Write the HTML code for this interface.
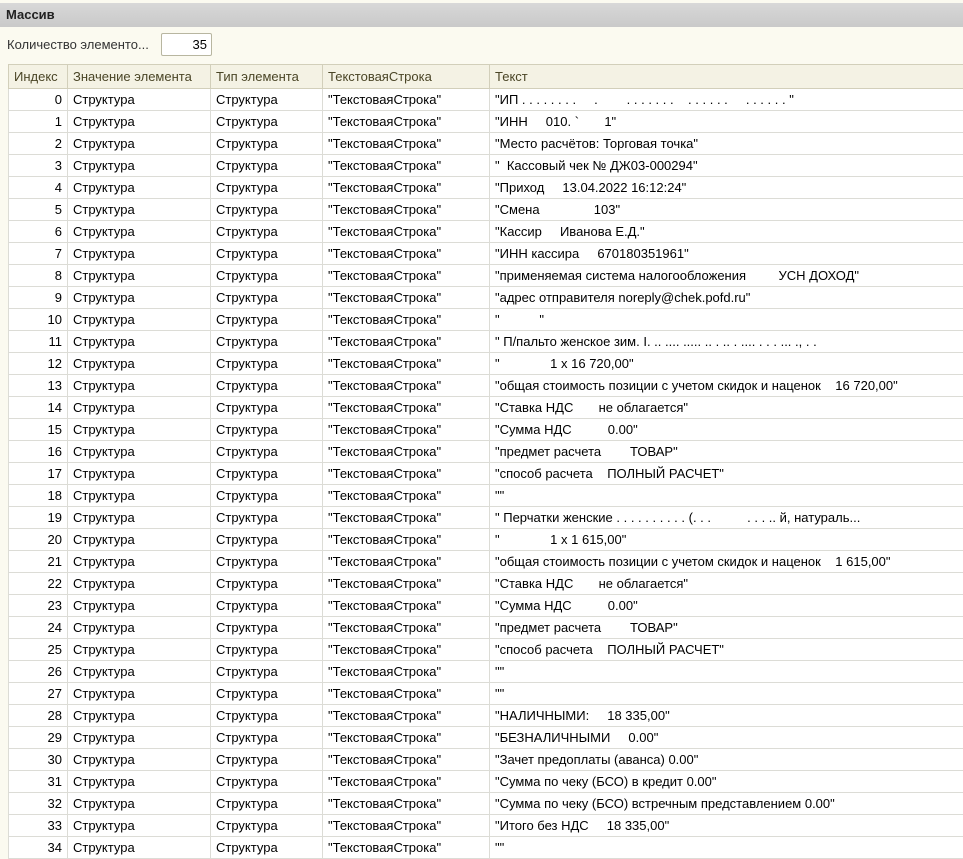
<!DOCTYPE html>
<html><head><meta charset="utf-8"><style>
body{margin:0;width:963px;height:858px;overflow:hidden;background:#fbfaf0;font-family:"Liberation Sans",sans-serif;font-size:13px;color:#000;position:relative}
.title{position:absolute;left:0;top:3px;width:963px;height:24px;background:linear-gradient(#d8d8d8,#c9c9c9);font-weight:bold;font-size:13px;line-height:24px;padding-left:6px;box-sizing:border-box;color:#222}
.lbl{position:absolute;left:7px;top:37px;color:#333}
.inp{position:absolute;left:161px;top:33px;width:51px;height:23px;border:1px solid #b8b6a0;background:#fff;box-sizing:border-box;border-radius:2px;text-align:right;padding-right:4px;line-height:21px}
table{position:absolute;left:8px;top:64px;border-collapse:collapse;table-layout:fixed;width:960px;background:#fff}
td,th{border:1px solid #dcdcd6;height:21px;padding:0 5px;white-space:nowrap;overflow:hidden;font-weight:normal;text-align:left;line-height:21px}
th{background:#f4f2e4;color:#4a4526;border-color:#d2cfba;height:23px;font-size:13px}
td.i{text-align:right}
tr.sel td{border-top:1px dotted #000;border-bottom:1px dotted #000}
</style></head><body>
<div class="title">Массив</div>
<div class="lbl">Количество элементо...</div>
<div class="inp">35</div>
<table>
<colgroup><col style="width:59px"><col style="width:143px"><col style="width:112px"><col style="width:167px"><col style="width:479px"></colgroup>
<tr><th>Индекс</th><th>Значение элемента</th><th>Тип элемента</th><th>ТекстоваяСтрока</th><th>Текст</th></tr>
<tr class="sel"><td class="i">0</td><td>Структура</td><td>Структура</td><td>"ТекстоваяСтрока"</td><td>"ИП . . . . . . . .&nbsp;&nbsp;&nbsp;&nbsp; .&nbsp;&nbsp;&nbsp;&nbsp;&nbsp;&nbsp;&nbsp; . . . . . . .&nbsp;&nbsp;&nbsp; . . . . . .&nbsp;&nbsp;&nbsp;&nbsp; . . . . . . "</td></tr>
<tr><td class="i">1</td><td>Структура</td><td>Структура</td><td>"ТекстоваяСтрока"</td><td>"ИНН &nbsp;&nbsp;&nbsp; 010. `&nbsp;&nbsp;&nbsp;&nbsp;&nbsp;&nbsp; 1"</td></tr>
<tr><td class="i">2</td><td>Структура</td><td>Структура</td><td>"ТекстоваяСтрока"</td><td>"Место расчётов: Торговая точка"</td></tr>
<tr><td class="i">3</td><td>Структура</td><td>Структура</td><td>"ТекстоваяСтрока"</td><td>"&nbsp; Кассовый чек № ДЖ03-000294"</td></tr>
<tr><td class="i">4</td><td>Структура</td><td>Структура</td><td>"ТекстоваяСтрока"</td><td>"Приход &nbsp;&nbsp;&nbsp; 13.04.2022 16:12:24"</td></tr>
<tr><td class="i">5</td><td>Структура</td><td>Структура</td><td>"ТекстоваяСтрока"</td><td>"Смена &nbsp;&nbsp;&nbsp;&nbsp;&nbsp;&nbsp;&nbsp;&nbsp;&nbsp;&nbsp;&nbsp;&nbsp;&nbsp; 103"</td></tr>
<tr><td class="i">6</td><td>Структура</td><td>Структура</td><td>"ТекстоваяСтрока"</td><td>"Кассир &nbsp;&nbsp;&nbsp; Иванова Е.Д."</td></tr>
<tr><td class="i">7</td><td>Структура</td><td>Структура</td><td>"ТекстоваяСтрока"</td><td>"ИНН кассира &nbsp;&nbsp;&nbsp; 670180351961"</td></tr>
<tr><td class="i">8</td><td>Структура</td><td>Структура</td><td>"ТекстоваяСтрока"</td><td>"применяемая система налогообложения &nbsp;&nbsp;&nbsp;&nbsp;&nbsp;&nbsp;&nbsp; УСН ДОХОД"</td></tr>
<tr><td class="i">9</td><td>Структура</td><td>Структура</td><td>"ТекстоваяСтрока"</td><td>"адрес отправителя noreply@chek.pofd.ru"</td></tr>
<tr><td class="i">10</td><td>Структура</td><td>Структура</td><td>"ТекстоваяСтрока"</td><td>"&nbsp;&nbsp;&nbsp;&nbsp;&nbsp;&nbsp;&nbsp;&nbsp;&nbsp;&nbsp; "</td></tr>
<tr><td class="i">11</td><td>Структура</td><td>Структура</td><td>"ТекстоваяСтрока"</td><td>" П/пальто женское зим. I. .. .... ..... .. . .. . .... . . . ... ., . .</td></tr>
<tr><td class="i">12</td><td>Структура</td><td>Структура</td><td>"ТекстоваяСтрока"</td><td>"&nbsp;&nbsp;&nbsp;&nbsp;&nbsp;&nbsp;&nbsp;&nbsp;&nbsp;&nbsp;&nbsp;&nbsp;&nbsp; 1 x 16 720,00"</td></tr>
<tr><td class="i">13</td><td>Структура</td><td>Структура</td><td>"ТекстоваяСтрока"</td><td>"общая стоимость позиции с учетом скидок и наценок &nbsp;&nbsp; 16 720,00"</td></tr>
<tr><td class="i">14</td><td>Структура</td><td>Структура</td><td>"ТекстоваяСтрока"</td><td>"Ставка НДС &nbsp;&nbsp;&nbsp;&nbsp;&nbsp; не облагается"</td></tr>
<tr><td class="i">15</td><td>Структура</td><td>Структура</td><td>"ТекстоваяСтрока"</td><td>"Сумма НДС &nbsp;&nbsp;&nbsp;&nbsp;&nbsp;&nbsp;&nbsp;&nbsp; 0.00"</td></tr>
<tr><td class="i">16</td><td>Структура</td><td>Структура</td><td>"ТекстоваяСтрока"</td><td>"предмет расчета &nbsp;&nbsp;&nbsp;&nbsp;&nbsp;&nbsp; ТОВАР"</td></tr>
<tr><td class="i">17</td><td>Структура</td><td>Структура</td><td>"ТекстоваяСтрока"</td><td>"способ расчета &nbsp;&nbsp; ПОЛНЫЙ РАСЧЕТ"</td></tr>
<tr><td class="i">18</td><td>Структура</td><td>Структура</td><td>"ТекстоваяСтрока"</td><td>""</td></tr>
<tr><td class="i">19</td><td>Структура</td><td>Структура</td><td>"ТекстоваяСтрока"</td><td>" Перчатки женские . . . . . . . . . . (. . .&nbsp;&nbsp;&nbsp;&nbsp;&nbsp;&nbsp;&nbsp;&nbsp;&nbsp; . . . .. й, натураль...</td></tr>
<tr><td class="i">20</td><td>Структура</td><td>Структура</td><td>"ТекстоваяСтрока"</td><td>"&nbsp;&nbsp;&nbsp;&nbsp;&nbsp;&nbsp;&nbsp;&nbsp;&nbsp;&nbsp;&nbsp;&nbsp;&nbsp; 1 x 1 615,00"</td></tr>
<tr><td class="i">21</td><td>Структура</td><td>Структура</td><td>"ТекстоваяСтрока"</td><td>"общая стоимость позиции с учетом скидок и наценок &nbsp;&nbsp; 1 615,00"</td></tr>
<tr><td class="i">22</td><td>Структура</td><td>Структура</td><td>"ТекстоваяСтрока"</td><td>"Ставка НДС &nbsp;&nbsp;&nbsp;&nbsp;&nbsp; не облагается"</td></tr>
<tr><td class="i">23</td><td>Структура</td><td>Структура</td><td>"ТекстоваяСтрока"</td><td>"Сумма НДС &nbsp;&nbsp;&nbsp;&nbsp;&nbsp;&nbsp;&nbsp;&nbsp; 0.00"</td></tr>
<tr><td class="i">24</td><td>Структура</td><td>Структура</td><td>"ТекстоваяСтрока"</td><td>"предмет расчета &nbsp;&nbsp;&nbsp;&nbsp;&nbsp;&nbsp; ТОВАР"</td></tr>
<tr><td class="i">25</td><td>Структура</td><td>Структура</td><td>"ТекстоваяСтрока"</td><td>"способ расчета &nbsp;&nbsp; ПОЛНЫЙ РАСЧЕТ"</td></tr>
<tr><td class="i">26</td><td>Структура</td><td>Структура</td><td>"ТекстоваяСтрока"</td><td>""</td></tr>
<tr><td class="i">27</td><td>Структура</td><td>Структура</td><td>"ТекстоваяСтрока"</td><td>""</td></tr>
<tr><td class="i">28</td><td>Структура</td><td>Структура</td><td>"ТекстоваяСтрока"</td><td>"НАЛИЧНЫМИ: &nbsp;&nbsp;&nbsp; 18 335,00"</td></tr>
<tr><td class="i">29</td><td>Структура</td><td>Структура</td><td>"ТекстоваяСтрока"</td><td>"БЕЗНАЛИЧНЫМИ &nbsp;&nbsp;&nbsp; 0.00"</td></tr>
<tr><td class="i">30</td><td>Структура</td><td>Структура</td><td>"ТекстоваяСтрока"</td><td>"Зачет предоплаты (аванса) 0.00"</td></tr>
<tr><td class="i">31</td><td>Структура</td><td>Структура</td><td>"ТекстоваяСтрока"</td><td>"Сумма по чеку (БСО) в кредит 0.00"</td></tr>
<tr><td class="i">32</td><td>Структура</td><td>Структура</td><td>"ТекстоваяСтрока"</td><td>"Сумма по чеку (БСО) встречным представлением 0.00"</td></tr>
<tr><td class="i">33</td><td>Структура</td><td>Структура</td><td>"ТекстоваяСтрока"</td><td>"Итого без НДС &nbsp;&nbsp;&nbsp; 18 335,00"</td></tr>
<tr><td class="i">34</td><td>Структура</td><td>Структура</td><td>"ТекстоваяСтрока"</td><td>""</td></tr>
</table>
</body></html>
